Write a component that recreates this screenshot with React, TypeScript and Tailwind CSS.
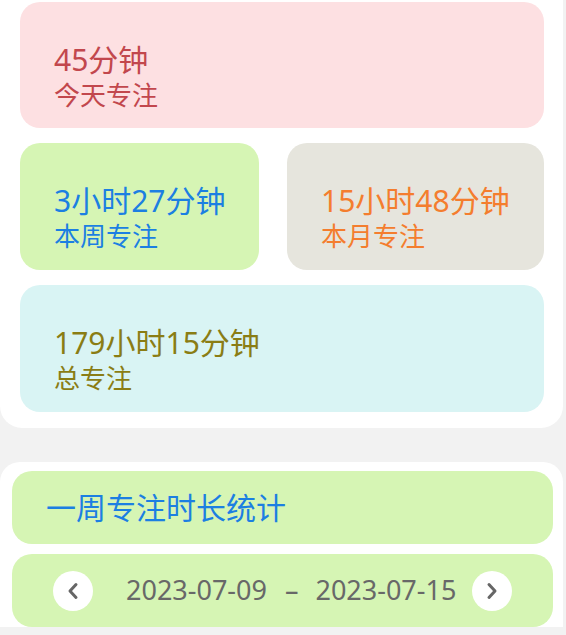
import React from "react";

interface StatCardProps {
  value: string;
  label: string;
  bg: string;
  color: string;
  h: string;
}

function StatCard({ value, label, bg, color, h }: StatCardProps) {
  return (
    <div className={`rounded-[20px] pl-[34px] pt-[40px] ${h} ${bg} ${color}`}>
      <div className="text-[30px] leading-[36px] whitespace-nowrap">{value}</div>
      <div className="text-[26px] leading-[34px] whitespace-nowrap">{label}</div>
    </div>
  );
}

function Chevron({ dir }: { dir: "left" | "right" }) {
  return (
    <div className="w-[40px] h-[40px] rounded-full bg-white flex items-center justify-center shrink-0">
      <svg width="12" height="18" viewBox="0 0 12 18" fill="none" stroke="#666" strokeWidth={3} strokeLinecap="round" strokeLinejoin="round">
        {dir === "left" ? <polyline points="9,2.5 3,9 9,15.5" /> : <polyline points="3,2.5 9,9 3,15.5" />}
      </svg>
    </div>
  );
}

export default function App() {
  return (
    <div
      className="min-h-screen bg-[#f2f2f2] pb-[8px]"
      style={{ fontFamily: '"Noto Sans", "Noto Sans CJK SC", sans-serif' }}
    >
      {/* overview */}
      <div className="w-[563px] bg-white rounded-b-[22px] pl-[20px] pr-[19px] pt-[2px] pb-[16px] flex flex-col gap-[15px]">
        <StatCard value="45分钟" label="今天专注" bg="bg-[#fde0e2]" color="text-[#c2474d]" h="h-[126px]" />
        <div className="grid grid-cols-[239px_1fr] gap-[28px]">
          <StatCard value="3小时27分钟" label="本周专注" bg="bg-[#d6f5b4]" color="text-[#1c7fe2]" h="h-[127px]" />
          <StatCard value="15小时48分钟" label="本月专注" bg="bg-[#e6e5dd]" color="text-[#f47d2e]" h="h-[127px]" />
        </div>
        <StatCard value="179小时15分钟" label="总专注" bg="bg-[#d9f4f4]" color="text-[#8a7d14]" h="h-[127px]" />
      </div>

      {/* weekly */}
      <div className="w-[563px] mt-[34px] bg-white rounded-t-[20px] pl-[12px] pr-[10px] pt-[9px] flex flex-col gap-[10px]">
        <div className="h-[73px] rounded-[20px] bg-[#d6f5b4] flex items-center pl-[34px]">
          <span className="text-[30px] text-[#1c7fe2]">一周专注时长统计</span>
        </div>
        <div className="h-[73px] rounded-[20px] bg-[#d6f5b4] flex items-center px-[41px] text-[27px] text-[#686868]">
          <Chevron dir="left" />
          <span className="ml-[33px]">2023-07-09</span>
          <span className="ml-[18px]">–</span>
          <span className="ml-[17px]">2023-07-15</span>
          <div className="ml-auto">
            <Chevron dir="right" />
          </div>
        </div>
      </div>
    </div>
  );
}
